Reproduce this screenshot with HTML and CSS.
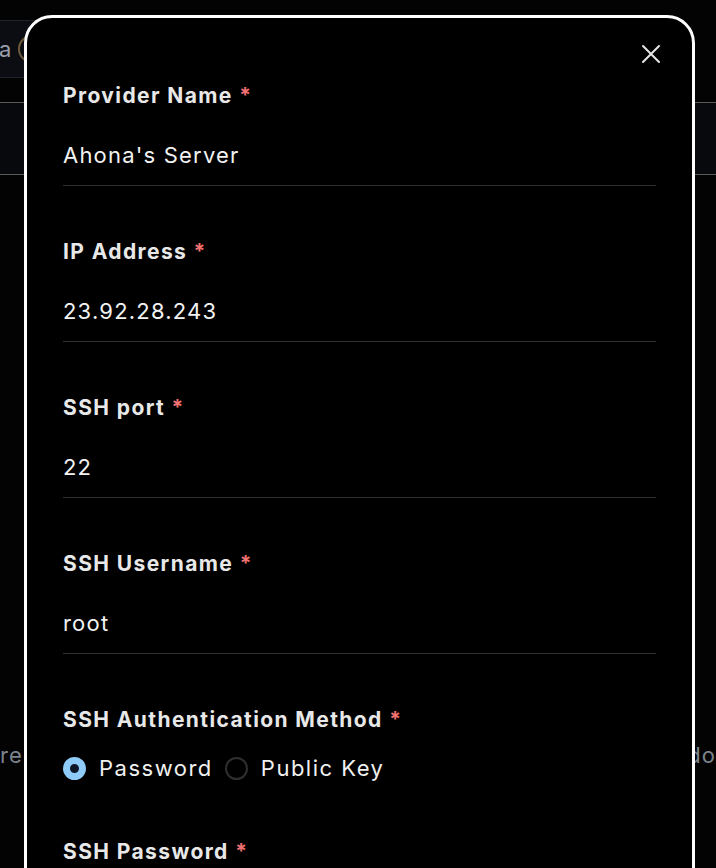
FILE: index.html
```html
<!DOCTYPE html>
<html lang="en">
<head>
<meta charset="utf-8">
<title>Add Provider</title>
<link rel="stylesheet" href="styles.css">
</head>
<body>
<div class="page">
  <div class="topbar">
    <div class="search"><span class="search-text">a</span><span class="avatar"></span></div>
  </div>
  <div class="band"></div>
  <div class="textrow"><span class="bg-left">re</span><span class="bg-right">do</span></div>
</div>

<div class="modal">
  <button class="close" aria-label="Close">
    <svg width="20" height="20" viewBox="0 0 20 20"><path d="M2 2 L18 18 M18 2 L2 18" stroke="#e6e6e6" stroke-width="2" stroke-linecap="round"/></svg>
  </button>

  <div class="field">
    <div class="label">Provider Name <span class="req">*</span></div>
    <div class="input">Ahona's Server</div>
  </div>
  <div class="field">
    <div class="label">IP Address <span class="req">*</span></div>
    <div class="input">23.92.28.243</div>
  </div>
  <div class="field">
    <div class="label">SSH port <span class="req">*</span></div>
    <div class="input">22</div>
  </div>
  <div class="field">
    <div class="label">SSH Username <span class="req">*</span></div>
    <div class="input">root</div>
  </div>
  <div class="field radio-field">
    <div class="label">SSH Authentication Method <span class="req">*</span></div>
    <div class="radios">
      <span class="radio checked"></span><span class="radio-text">Password</span>
      <span class="radio"></span><span class="radio-text">Public Key</span>
    </div>
  </div>
  <div class="field">
    <div class="label">SSH Password <span class="req">*</span></div>
  </div>
</div>
</body>
</html>
```
FILE: styles.css
```css
html, body {
  margin: 0;
  padding: 0;
}
body {
  background: #030303;
  width: 716px;
  height: 868px;
  overflow: hidden;
  position: relative;
  font-family: "Inter", "Liberation Sans", sans-serif;
  color: #ececec;
}
.page {
  padding-top: 20px;
}
.topbar {
  height: 58px;
}
.search {
  width: 400px;
  height: 56px;
  margin-left: -8px;
  background: #0b0d12;
  border: 1px solid #1f2228;
  border-radius: 6px;
  display: flex;
  align-items: center;
  gap: 6px;
  padding-left: 6px;
}
.search-text {
  color: #9aa0aa;
  font-size: 22px;
  letter-spacing: 1px;
}
.avatar {
  width: 24px;
  height: 24px;
  border: 2px solid #6b5a3a;
  border-radius: 50%;
}
.band {
  margin-top: 24px;
  height: 71px;
  background: #07090d;
  border-top: 1px solid #5a5a5a;
  border-bottom: 1px solid #5a5a5a;
}
.textrow {
  margin-top: 565px;
  display: flex;
  justify-content: space-between;
  font-size: 22px;
  color: #7d838c;
  line-height: 30px;
  letter-spacing: 1px;
}
.bg-left { margin-left: 0; }
.bg-right { margin-right: 0; }

.modal {
  position: absolute;
  left: 24px;
  top: 15px;
  width: 593px;
  height: 900px;
  background: #000;
  border: 3px solid #fff;
  border-radius: 28px;
  padding: 64px 36px 0 36px;
  box-sizing: content-box;
}
.close {
  position: absolute;
  top: 21px;
  right: 26px;
  width: 30px;
  height: 30px;
  padding: 0;
  border: 0;
  background: none;
  display: flex;
  align-items: center;
  justify-content: center;
}
.field {
  margin-bottom: 52px;
}
.label {
  font-size: 21px;
  font-weight: 700;
  line-height: 28px;
  color: #e8e8e8;
  letter-spacing: 1.4px;
}
.req {
  color: #f47171;
  font-weight: 700;
}
.input {
  margin-top: 20px;
  padding: 10px 0 15px;
  line-height: 30px;
  font-size: 22px;
  color: #f2f2f2;
  letter-spacing: 1.2px;
  border-bottom: 1px solid #2e2e2e;
}
.radio-field {
  margin-bottom: 55px;
}
.radios {
  margin-top: 19px;
  display: flex;
  align-items: center;
  line-height: 30px;
  font-size: 22px;
  color: #f0f0f0;
  letter-spacing: 1.5px;
}
.radio {
  width: 19px;
  height: 19px;
  border: 2px solid #2f2f2f;
  border-radius: 50%;
  box-sizing: content-box;
}
.radio.checked {
  width: 9px;
  height: 9px;
  border: 7px solid #8ecbf6;
  background: #0d1626;
}
.radio-text {
  margin-left: 13px;
  margin-right: 12px;
}
```
